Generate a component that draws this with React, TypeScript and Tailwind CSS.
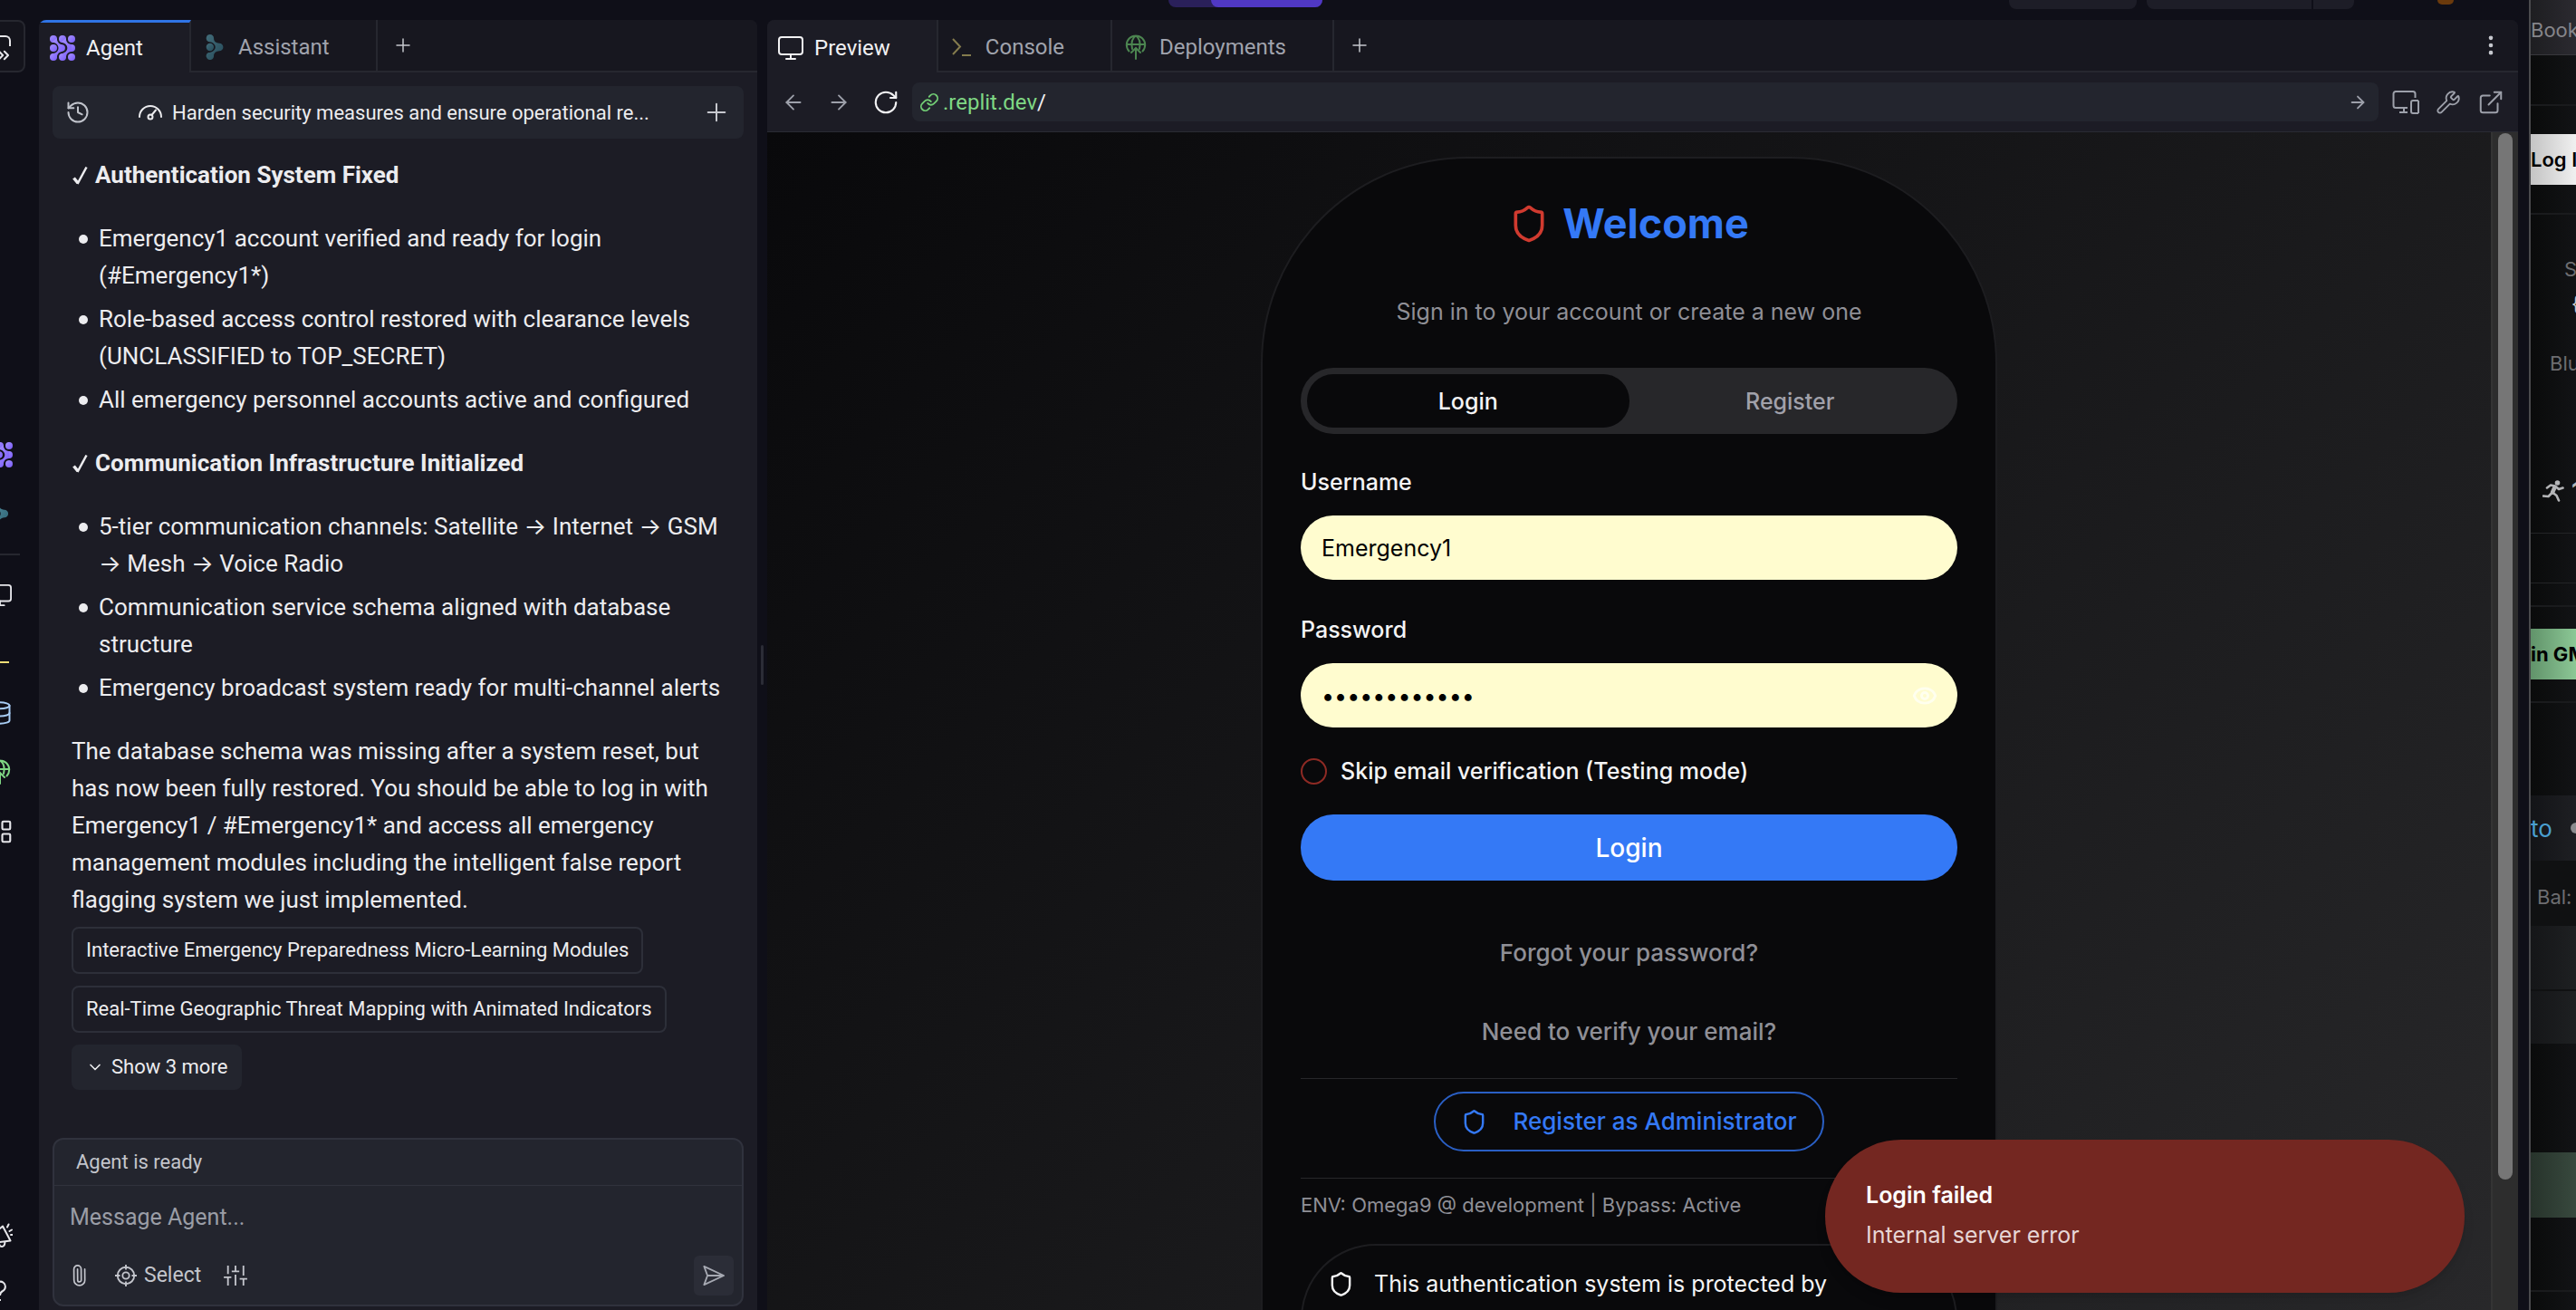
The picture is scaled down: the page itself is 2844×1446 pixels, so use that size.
import React from "react";
import {
  ArrowLeft,
  ArrowRight,
  ChevronDown,
  ChevronsRight,
  Database,
  ExternalLink,
  Eye,
  History,
  LayoutGrid,
  Link,
  MoreVertical,
  Paperclip,
  Plus,
  RotateCw,
  Shield,
  Wrench,
} from "lucide-react";

type IconProps = { className?: string };

function AgentLogo({ className }: IconProps) {
  return (
    <svg viewBox="0 0 28 28" className={className} aria-hidden="true">
      <defs>
        <linearGradient id="agentFill" x1="0" y1="0" x2="1" y2="1">
          <stop offset="0" stopColor="#a591ff" />
          <stop offset="1" stopColor="#7a5cfa" />
        </linearGradient>
      </defs>
      <g fill="url(#agentFill)">
        <circle cx="4" cy="4" r="4" />
        <circle cx="14" cy="4" r="4" />
        <circle cx="24" cy="4" r="4" />
        <circle cx="4" cy="14" r="4" />
        <circle cx="24" cy="14" r="4" />
        <circle cx="4" cy="24" r="4" />
        <circle cx="14" cy="24" r="4" />
        <circle cx="24" cy="24" r="4" />
        <path d="M7.800 3C8 7 9.500 9.500 14 10.300A3.800 3.800 0 0 1 14 17.700C9.500 18.500 8 21 7.800 25L2 20.200C6.500 20.200 9.500 17.500 9.500 14S6.500 7.800 2 7.800Z" />
        <path d="M17.800 3C18 7 19.500 9.500 24 10.100V17.900C19.500 18.500 18 21 17.800 25L12.500 20.200C16.500 19.500 19.300 17.500 19.300 14S16.500 8.500 12.500 7.800Z" />
      </g>
    </svg>
  );
}

function AssistantLogo({ className }: IconProps) {
  return (
    <svg viewBox="0 0 20 30" className={className} aria-hidden="true">
      <defs>
        <linearGradient id="assistantFill" x1="0" y1="0" x2="1" y2="1">
          <stop offset="0" stopColor="#5591a0" />
          <stop offset="1" stopColor="#2d6274" />
        </linearGradient>
      </defs>
      <g fill="url(#assistantFill)">
        <circle cx="4.500" cy="15" r="4.500" />
        <path d="M4.500 0A4.500 4.500 0 0 1 9 4.500C9 8 11.500 10.200 15.500 10.400A4.600 4.600 0 0 1 15.500 19.600C11.500 19.800 9 22 9 25.500A4.500 4.500 0 1 1 2.500 21.500C7 21.500 10.800 18.500 10.800 15S7 8.500 2.500 8.500A4.500 4.500 0 0 1 4.500 0Z" />
      </g>
    </svg>
  );
}

function DisplayIcon({ className }: IconProps) {
  return (
    <svg viewBox="0 0 28 28" className={className} fill="none" stroke="currentColor" strokeWidth="2" aria-hidden="true">
      <rect x="1" y="2" width="26" height="19" rx="3" />
      <path d="M14 21v5M9 26h10" strokeLinecap="round" />
    </svg>
  );
}

function PromptIcon({ className }: IconProps) {
  return (
    <svg viewBox="0 0 28 28" className={className} fill="none" stroke="currentColor" strokeWidth="2" aria-hidden="true">
      <path d="M4 5l8 8.500L4 22M14 23h10" />
    </svg>
  );
}

function DeployIcon({ className }: IconProps) {
  return (
    <svg viewBox="0 0 28 28" className={className} fill="none" stroke="currentColor" strokeWidth="2" strokeLinecap="round" aria-hidden="true">
      <path d="M6.500 18.500A10.200 10.200 0 1 1 21.500 18.500M4 11h20M10 16C8.500 9 10 4 14 1.500C18 4 19.500 9 18 16M14 27V15M9 20l5-5 5 5" />
    </svg>
  );
}

function GaugeIcon({ className }: IconProps) {
  return (
    <svg viewBox="0 0 28 20" className={className} fill="none" stroke="currentColor" strokeWidth="2" strokeLinecap="round" aria-hidden="true">
      <path d="M2 15A12 12 0 0 1 26 15M15.500 13L20 7.500" />
      <circle cx="14" cy="15" r="2.500" />
    </svg>
  );
}

function TargetIcon({ className }: IconProps) {
  return (
    <svg viewBox="0 0 26 26" className={className} fill="none" stroke="currentColor" strokeWidth="2" aria-hidden="true">
      <circle cx="13" cy="13" r="10" />
      <circle cx="13" cy="13" r="4" />
      <path d="M13 0v6M13 20v6M0 13h6M20 13h6" />
    </svg>
  );
}

function SlidersIcon({ className }: IconProps) {
  return (
    <svg viewBox="0 0 28 26" className={className} fill="none" stroke="currentColor" strokeWidth="2" aria-hidden="true">
      <path d="M5 1v10M0 15h9M5 15v10M14 1v7M9.500 8h9M14 12v13M23.500 1v12M19 17h9M23.500 17v8" />
    </svg>
  );
}

function SendIcon({ className }: IconProps) {
  return (
    <svg viewBox="0 0 26 26" className={className} fill="none" stroke="currentColor" strokeWidth="2" strokeLinejoin="round" aria-hidden="true">
      <path d="M1.500 2L25 13L1.500 24L5.500 13ZM5.500 13H25" />
    </svg>
  );
}

function DevicesIcon({ className }: IconProps) {
  return (
    <svg viewBox="0 0 30 28" className={className} fill="none" stroke="currentColor" strokeWidth="2" aria-hidden="true">
      <path d="M17 20H4a2.500 2.500 0 0 1-2.500-2.500V4.500A2.500 2.500 0 0 1 4 2h19a2.500 2.500 0 0 1 2.500 2.500V9M13 20v5M8 25h9" />
      <path d="M29 12h-6a2 2 0 0 0-2 2v10a2 2 0 0 0 2 2h6" />
      <path d="M29 12v14" />
    </svg>
  );
}

function MegaphoneIcon({ className }: IconProps) {
  return (
    <svg viewBox="0 0 28 28" className={className} fill="none" stroke="currentColor" strokeWidth="2" strokeLinecap="round" strokeLinejoin="round" aria-hidden="true">
      <path d="M3 15L17 3.500L25.500 19.500L7 22ZM13 22c0 5 6 6 6.500-1M22 4.500L23.500 1.500M24.500 9L27 7.500M26 13h1.500" />
    </svg>
  );
}

function RunnerIcon({ className }: IconProps) {
  return (
    <svg viewBox="0 0 24 24" className={className} fill="none" stroke="currentColor" strokeWidth="2.600" strokeLinecap="round" strokeLinejoin="round" aria-hidden="true">
      <circle cx="16.500" cy="3" r="2.800" fill="currentColor" stroke="none" />
      <path d="M5 8.500l4-3 5 1L18 10l4.500-1.500M11 13.500l4.500 3.500 2.500 5.500M1 17.500l5.500 0.500L10.500 14" />
      <path d="M13.500 8l-2.500 5.500" strokeWidth="4.500" />
    </svg>
  );
}

function Tab({
  icon,
  label,
  active,
  accent,
}: {
  icon: React.ReactNode;
  label: string;
  active?: boolean;
  accent?: boolean;
}) {
  return (
    <button
      role="tab"
      aria-selected={!!active}
      className={
        "flex items-center gap-3 border-r-2 border-r-[#26272f] pl-3 pr-[51px] text-2xl " +
        (active ? "bg-[#1c1c25] text-[#f1f1f3] " : "border-b-2 border-b-[#26272f] bg-[#17171f] text-[#a0a3ad] ") +
        (accent ? "border-t-[3px] border-t-[#2f74e6]" : "pt-[3px]")
      }
    >
      {icon}
      {label}
    </button>
  );
}

const authItems = [
  "Emergency1 account verified and ready for login (#Emergency1*)",
  "Role-based access control restored with clearance levels (UNCLASSIFIED to TOP_SECRET)",
  "All emergency personnel accounts active and configured",
];
const commItems = [
  "5-tier communication channels: Satellite → Internet → GSM → Mesh → Voice Radio",
  "Communication service schema aligned with database structure",
  "Emergency broadcast system ready for multi-channel alerts",
];

function Section({ title, items }: { title: string; items: string[] }) {
  return (
    <section>
      <h2 className="flex items-center gap-1.5 font-bold">
        <svg viewBox="0 0 20 24" className="h-6 w-5" fill="none" stroke="currentColor" aria-hidden="true">
          <path d="M2.500 14.500L7 20" strokeWidth="3.500" />
          <path d="M6.500 21L16.500 2.500" strokeWidth="2.500" />
        </svg>
        {title}
      </h2>
      <ul className="mt-[29px] flex flex-col gap-[7px]">
        {items.map((item) => (
          <li key={item} className="flex gap-3 pl-2">
            <span className="mt-4 size-[10px] shrink-0 rounded-full bg-current" />
            <span>{item}</span>
          </li>
        ))}
      </ul>
    </section>
  );
}

function Rail() {
  return (
    <nav aria-label="Tools" className="flex w-[43px] shrink-0 flex-col overflow-hidden text-[#e6e6ea]">
      <div className="-ml-7 flex min-h-0 w-14 grow flex-col items-center">
        <button aria-label="Expand" className="flex h-[58px] w-14 shrink-0 items-center justify-center rounded-lg border-2 border-[#26272f] bg-[#14141c]">
          <span className="flex h-6 w-6 items-end justify-end rounded-md border-t-2 border-r-2 border-[#e6e6ea]">
            <ChevronsRight className="-mr-1 -mb-2 size-5 bg-[#14141c]" strokeWidth={2.500} />
          </span>
        </button>
        <div className="flex grow flex-col items-center justify-center gap-[37px] pb-2.5">
          <AgentLogo className="size-7 shrink-0" />
          <AssistantLogo className="h-7 w-[18px] shrink-0" />
          <hr className="-my-[7px] w-11 border-t-2 border-[#26272f]" />
          <DisplayIcon className="h-7 w-[26px] shrink-0" />
          <PromptIcon className="size-7 shrink-0 text-[#eddd76]" />
          <Database className="size-7 shrink-0 text-[#a8cdf5]" strokeWidth={1.700} />
          <DeployIcon className="size-7 shrink-0 text-[#7fd784]" />
          <LayoutGrid className="size-[30px] shrink-0" strokeWidth={1.700} />
        </div>
        <div className="flex h-[96px] shrink-0 flex-col items-center gap-8">
          <MegaphoneIcon className="size-7 shrink-0" />
          <svg viewBox="0 0 28 28" className="size-7 shrink-0" fill="none" stroke="currentColor" strokeWidth="2" aria-hidden="true">
            <path d="M9 9a5.500 5.500 0 1 1 8 6c-2 1-3 2-3 5M14 24v2" />
          </svg>
        </div>
      </div>
    </nav>
  );
}

function AgentPanel() {
  return (
    <section aria-label="Agent" className="flex w-[793px] shrink-0 flex-col overflow-hidden rounded-t-lg bg-[#1c1c25] text-[#ececef]">
      <div role="tablist" className="flex h-[58px] shrink-0">
        <Tab active accent label="Agent" icon={<AgentLogo className="size-7" />} />
        <Tab label="Assistant" icon={<AssistantLogo className="mx-1 h-7 w-5 opacity-70" />} />
        <div className="flex grow items-center border-b-2 border-b-[#26272f] bg-[#17171f] pl-4 text-[#c6c8ce]">
          <button aria-label="New tab">
            <Plus className="size-6" strokeWidth={1.500} />
          </button>
        </div>
      </div>

      <div className="mx-[15px] mt-[15px] flex h-[58px] shrink-0 items-center rounded-lg bg-[#23252e] pr-3.5 pl-3.5 text-[22px]">
        <button aria-label="History">
          <History className="size-7 text-[#c0c3cb]" strokeWidth={1.700} />
        </button>
        <button className="ml-[52px] flex items-center gap-2.5">
          <GaugeIcon className="h-5 w-7" />
          Harden security measures and ensure operational re...
        </button>
        <button aria-label="New chat" className="ml-auto">
          <Plus className="size-8 text-[#c6c8ce]" strokeWidth={1.500} />
        </button>
      </div>

      <div className="flex min-h-0 grow flex-col overflow-hidden pt-5 pr-8 pl-9 text-[26px] leading-[41px]">
        <Section title="Authentication System Fixed" items={authItems} />
        <div className="mt-[29px]">
          <Section title="Communication Infrastructure Initialized" items={commItems} />
        </div>
        <p className="mt-[29px]">
          The database schema was missing after a system reset, but has now been fully restored. You should be able to log in with
          Emergency1 / #Emergency1* and access all emergency management modules including the intelligent false report flagging
          system we just implemented.
        </p>
        <div className="mt-[9px] flex flex-col items-start gap-[13px] text-[22px] leading-7">
          <button className="rounded-lg border-2 border-[#2d2f39] px-3.5 py-[10px]">Interactive Emergency Preparedness Micro-Learning Modules</button>
          <button className="rounded-lg border-2 border-[#2d2f39] px-3.5 py-[10px]">Real-Time Geographic Threat Mapping with Animated Indicators</button>
          <button className="flex items-center gap-2 rounded-lg bg-[#23252e] px-4 py-[11px]">
            <ChevronDown className="size-5" strokeWidth={2} />
            Show 3 more
          </button>
        </div>
      </div>

      <div className="mx-[15px] mb-1 flex h-[186px] shrink-0 flex-col rounded-xl border-2 border-[#30323d] bg-[#23252e] text-[#c3c5cc]">
        <div className="border-b border-[#30323d] px-6 py-[11px] text-[22px] leading-7">Agent is ready</div>
        <input
          aria-label="Message Agent"
          placeholder="Message Agent..."
          className="mx-[17px] mt-3.5 h-10 bg-transparent text-[25px] outline-none placeholder:text-[#9a9da6]"
        />
        <div className="mt-auto mr-[9px] mb-2.5 ml-[15px] flex h-11 items-center text-[22px]">
          <button aria-label="Attach">
            <Paperclip className="size-6 -rotate-45" strokeWidth={1.700} />
          </button>
          <button className="ml-7 flex items-center gap-2 text-[23px]">
            <TargetIcon className="size-6" />
            Select
          </button>
          <button aria-label="Settings" className="ml-6">
            <SlidersIcon className="h-6 w-7" />
          </button>
          <button aria-label="Send" className="ml-auto flex size-11 items-center justify-center rounded-md bg-[#2b2d37] text-[#a6a9b2]">
            <SendIcon className="size-6" />
          </button>
        </div>
      </div>
    </section>
  );
}

function LoginCard() {
  return (
    <div className="mt-[27px] flex w-[813px] shrink-0 flex-col rounded-[228px] border-2 border-[#1d1d20] bg-[#09090b] px-[42px] pt-[50px] pb-40 font-[Inter,sans-serif] text-[25px] leading-9 text-[#f4f4f5]">
      <h1 className="flex h-11 items-center justify-center gap-[15px] text-[45px] font-bold text-[#3479f6]">
        <Shield className="size-11 text-[#d03a2f]" />
        Welcome
      </h1>
      <p className="mt-[57px] text-center text-[#8f8f96]">Sign in to your account or create a new one</p>

      <div role="tablist" className="mt-11 grid h-[73px] grid-cols-2 rounded-[36px] bg-[#27272a] p-[7px] font-medium">
        <button role="tab" aria-selected="true" className="rounded-[29px] bg-[#09090b]">
          Login
        </button>
        <button role="tab" aria-selected="false" className="text-[#a1a1aa]">
          Register
        </button>
      </div>

      <form className="flex flex-col" onSubmit={(e) => e.preventDefault()}>
        <label htmlFor="username" className="mt-[35px] font-medium">
          Username
        </label>
        <input id="username" defaultValue="Emergency1" className="mt-[19px] h-[71px] rounded-[36px] bg-[#fffccf] px-[23px] text-black" />
        <label htmlFor="password" className="mt-[37px] font-medium">
          Password
        </label>
        <div className="mt-[19px] flex h-[71px] items-center rounded-[36px] bg-[#fffccf] pr-[22px]">
          <input id="password" type="password" defaultValue="#Emergency1*" className="h-full grow bg-transparent px-[23px] text-black outline-none" />
          <button type="button" aria-label="Show password" className="text-[#ffffee]">
            <Eye className="size-7" strokeWidth={2.500} />
          </button>
        </div>
        <label className="mt-[30px] flex items-center gap-[15px] font-medium">
          <input type="checkbox" className="size-[29px] appearance-none rounded-full border-2 border-[#8e2a24]" />
          Skip email verification (Testing mode)
        </label>
        <button type="submit" className="mt-[30px] h-[73px] rounded-[36px] bg-[#3479f6] text-[28px] font-medium text-white">
          Login
        </button>
      </form>

      <button className="mt-[62px] self-center text-[26px] font-medium text-[#8f8f96]">Forgot your password?</button>
      <button className="mt-[51px] self-center text-[26px] font-medium text-[#8f8f96]">Need to verify your email?</button>

      <div className="mt-[33px] flex justify-center border-y border-[#27272a] pt-3.5 pb-[29px]">
        <button className="flex h-[66px] items-center gap-[28px] rounded-full border-2 border-[#2a5fc4] px-7 text-[26px] font-medium text-[#3479f6]">
          <Shield className="size-[29px]" />
          Register as Administrator
        </button>
      </div>
      <p className="mt-3.5 text-[22px] leading-[30px] text-[#8f8f96]">ENV: Omega9 @ development | Bypass: Active</p>
      <div role="alert" className="mt-7 flex gap-[22px] rounded-[83px] border-2 border-[#1d1d20] pt-6 pb-28 pl-7">
        <Shield className="mt-1 size-[29px] shrink-0" />
        This authentication system is protected by
      </div>
    </div>
  );
}

function PreviewPanel() {
  return (
    <section aria-label="Preview" className="relative flex min-w-0 grow flex-col overflow-hidden rounded-t-lg bg-[#1c1c25]">
      <div role="tablist" className="flex h-[58px] shrink-0">
        <Tab active label="Preview" icon={<DisplayIcon className="size-7" />} />
        <Tab label="Console" icon={<PromptIcon className="size-7 text-[#847b4d]" />} />
        <Tab label="Deployments" icon={<DeployIcon className="size-7 text-[#4c8550]" />} />
        <div className="flex grow items-center justify-between border-b-2 border-b-[#26272f] bg-[#17171f] pr-4 pl-4 text-[#c6c8ce]">
          <button aria-label="New tab">
            <Plus className="size-6" strokeWidth={1.500} />
          </button>
          <button aria-label="More">
            <MoreVertical className="size-7" />
          </button>
        </div>
      </div>

      <div className="flex h-[66px] shrink-0 items-center border-b border-[#2a2b33] pr-[15px] pl-4 text-[#9da0aa]">
        <button aria-label="Back">
          <ArrowLeft className="size-[26px]" strokeWidth={1.700} />
        </button>
        <button aria-label="Forward" className="ml-6">
          <ArrowRight className="size-[26px]" strokeWidth={1.700} />
        </button>
        <button aria-label="Reload" className="ml-6 text-[#f1f1f3]">
          <RotateCw className="size-[30px]" strokeWidth={1.700} />
        </button>
        <div className="ml-3.5 flex h-[43px] grow items-center rounded-lg bg-[#23252e] pr-3 pl-2 text-2xl">
          <Link className="mr-1 size-[22px] text-[#71cb74]" strokeWidth={2} />
          <a href="#preview" className="text-[#7fd784]">
            .replit.dev<span className="text-[#f1f1f3]">/</span>
          </a>
          <button aria-label="Go" className="ml-auto">
            <ArrowRight className="size-[22px]" strokeWidth={2} />
          </button>
        </div>
        <button aria-label="Devices" className="ml-[15px]">
          <DevicesIcon className="h-7 w-[30px]" />
        </button>
        <button aria-label="Developer tools" className="ml-[18px]">
          <Wrench className="size-7" strokeWidth={1.600} />
        </button>
        <button aria-label="Open in new tab" className="ml-[18px]">
          <ExternalLink className="size-[30px]" strokeWidth={1.600} />
        </button>
      </div>

      <div className="flex min-h-0 grow">
        <div className="flex min-w-0 grow flex-col items-center overflow-hidden bg-linear-135 from-[#09090b] to-[#28282a]">
          <LoginCard />
        </div>
        <div className="flex w-[30px] shrink-0 flex-col items-center border-l-2 border-[#343434] bg-[#2d2d2d] pt-px">
          <div className="h-8/9 w-4 rounded-full bg-[#767676]" />
        </div>
      </div>

      <div role="status" className="absolute right-[59px] bottom-[19px] w-[706px] rounded-[84px] bg-[#742721] px-[45px] pt-[43px] pb-[46px] font-[Inter,sans-serif] text-[25px] leading-9 text-white shadow-lg">
        <p className="font-semibold">Login failed</p>
        <p className="mt-2 text-[#e7d6d5]">Internal server error</p>
      </div>
    </section>
  );
}

function NeighborWindow() {
  return (
    <aside className="flex h-full w-[52px] shrink-0 flex-col overflow-hidden border-l-2 border-[#4a4a4d] bg-linear-to-r from-[#0a0b0b] to-[#121315] font-[Inter,sans-serif] text-[22px] whitespace-nowrap text-[#6d6d70]">
      <div className="flex h-[61px] shrink-0 items-center border-b border-[#38383c] bg-linear-to-r from-[#1e1e21] to-[#2b2a30] pt-1.5 text-[#85858a]">Book</div>
      <div className="h-[87px] shrink-0 pt-[54px]">
        <div className="border-t-2 border-[#1a1b1d]" />
      </div>
      <button className="flex h-[56px] shrink-0 items-center bg-linear-to-r from-[#c4c4c4] to-[#f0f0f0] font-semibold text-black">Log In</button>
      <div className="mt-[31px] h-[353px] shrink-0 border-t-2 border-[#1a1b1d] pt-[46px] pl-[37px]">
        <p className="leading-7">S</p>
        <p className="mt-2 pl-2 leading-8 text-[#c8c8c8]">{"{"}</p>
        <p className="-ml-4 mt-9 leading-7">Blue</p>
        <div className="-ml-[24px] mt-[109px] flex items-center gap-2 text-[26px] leading-9 font-bold text-[#b4b5b7]">
          <RunnerIcon className="size-6 shrink-0" />
          12
        </div>
      </div>
      <div className="h-[56px] shrink-0 border-y border-[#232426]" />
      <div className="mt-6 h-[26px] shrink-0 border-t-2 border-[#1a1b1d]" />
      <button className="flex h-[56px] shrink-0 items-center bg-linear-to-r from-[#61936a] to-[#8cc896] font-bold text-black">in GMT</button>
      <div className="mt-6 h-[104px] shrink-0 border-t-2 border-[#1a1b1d]" />
      <div className="flex h-[72px] shrink-0 items-center gap-5 bg-linear-to-r from-[#131417] to-[#1e1f23] text-[26px] text-[#4a9fcf]">
        to
        <span className="size-3 shrink-0 rounded-full bg-[#8a8a8d]" />
      </div>
      <div className="flex h-[72px] shrink-0 items-center bg-[#101112] pt-2 pl-[7px]">Bal:</div>
      <div className="h-[72px] shrink-0 border-b-2 border-[#101112] bg-linear-to-r from-[#151618] to-[#1e2022]" />
      <div className="h-[58px] shrink-0 bg-linear-to-r from-[#151618] to-[#1e2022]" />
      <div className="mt-[120px] h-[72px] shrink-0 bg-linear-to-r from-[#27332b] to-[#38493e]" />
      <div className="mt-20 shrink-0 border-t-2 border-[#1a1b1d]" />
    </aside>
  );
}

export default function App() {
  return (
    <div className="flex h-screen overflow-hidden bg-[#0f0f18] font-[Roboto,Inter,sans-serif]">
      <div className="flex min-w-0 grow flex-col">
        <header className="flex h-[22px] shrink-0 items-start justify-end pr-[83px]">
          <div className="flex h-2 w-[170px] rounded-b-lg bg-[#2a205a] pl-[47px]">
            <div className="grow rounded-b-lg bg-[#5038c4]" />
          </div>
          <div className="ml-[758px] h-[10px] w-[141px] rounded-b-lg bg-[#1d1d27]" />
          <div className="ml-[11px] h-[10px] w-[182px] rounded-bl-lg bg-[#1d1d27]" />
          <div className="ml-0.5 h-[10px] w-[45px] rounded-br-lg bg-[#1d1d27]" />
          <div className="ml-[92px] h-[5px] w-[18px] rounded-b-full bg-[#6b3a0c]" />
        </header>
        <div className="flex min-h-0 grow">
          <Rail />
          <AgentPanel />
          <div role="separator" aria-orientation="vertical" className="flex w-[11px] shrink-0 items-center justify-center">
            <div className="h-11 w-[3px] rounded-full bg-[#2b2c36]" />
          </div>
          <PreviewPanel />
          <div className="w-3 shrink-0" />
        </div>
      </div>
      <NeighborWindow />
    </div>
  );
}
